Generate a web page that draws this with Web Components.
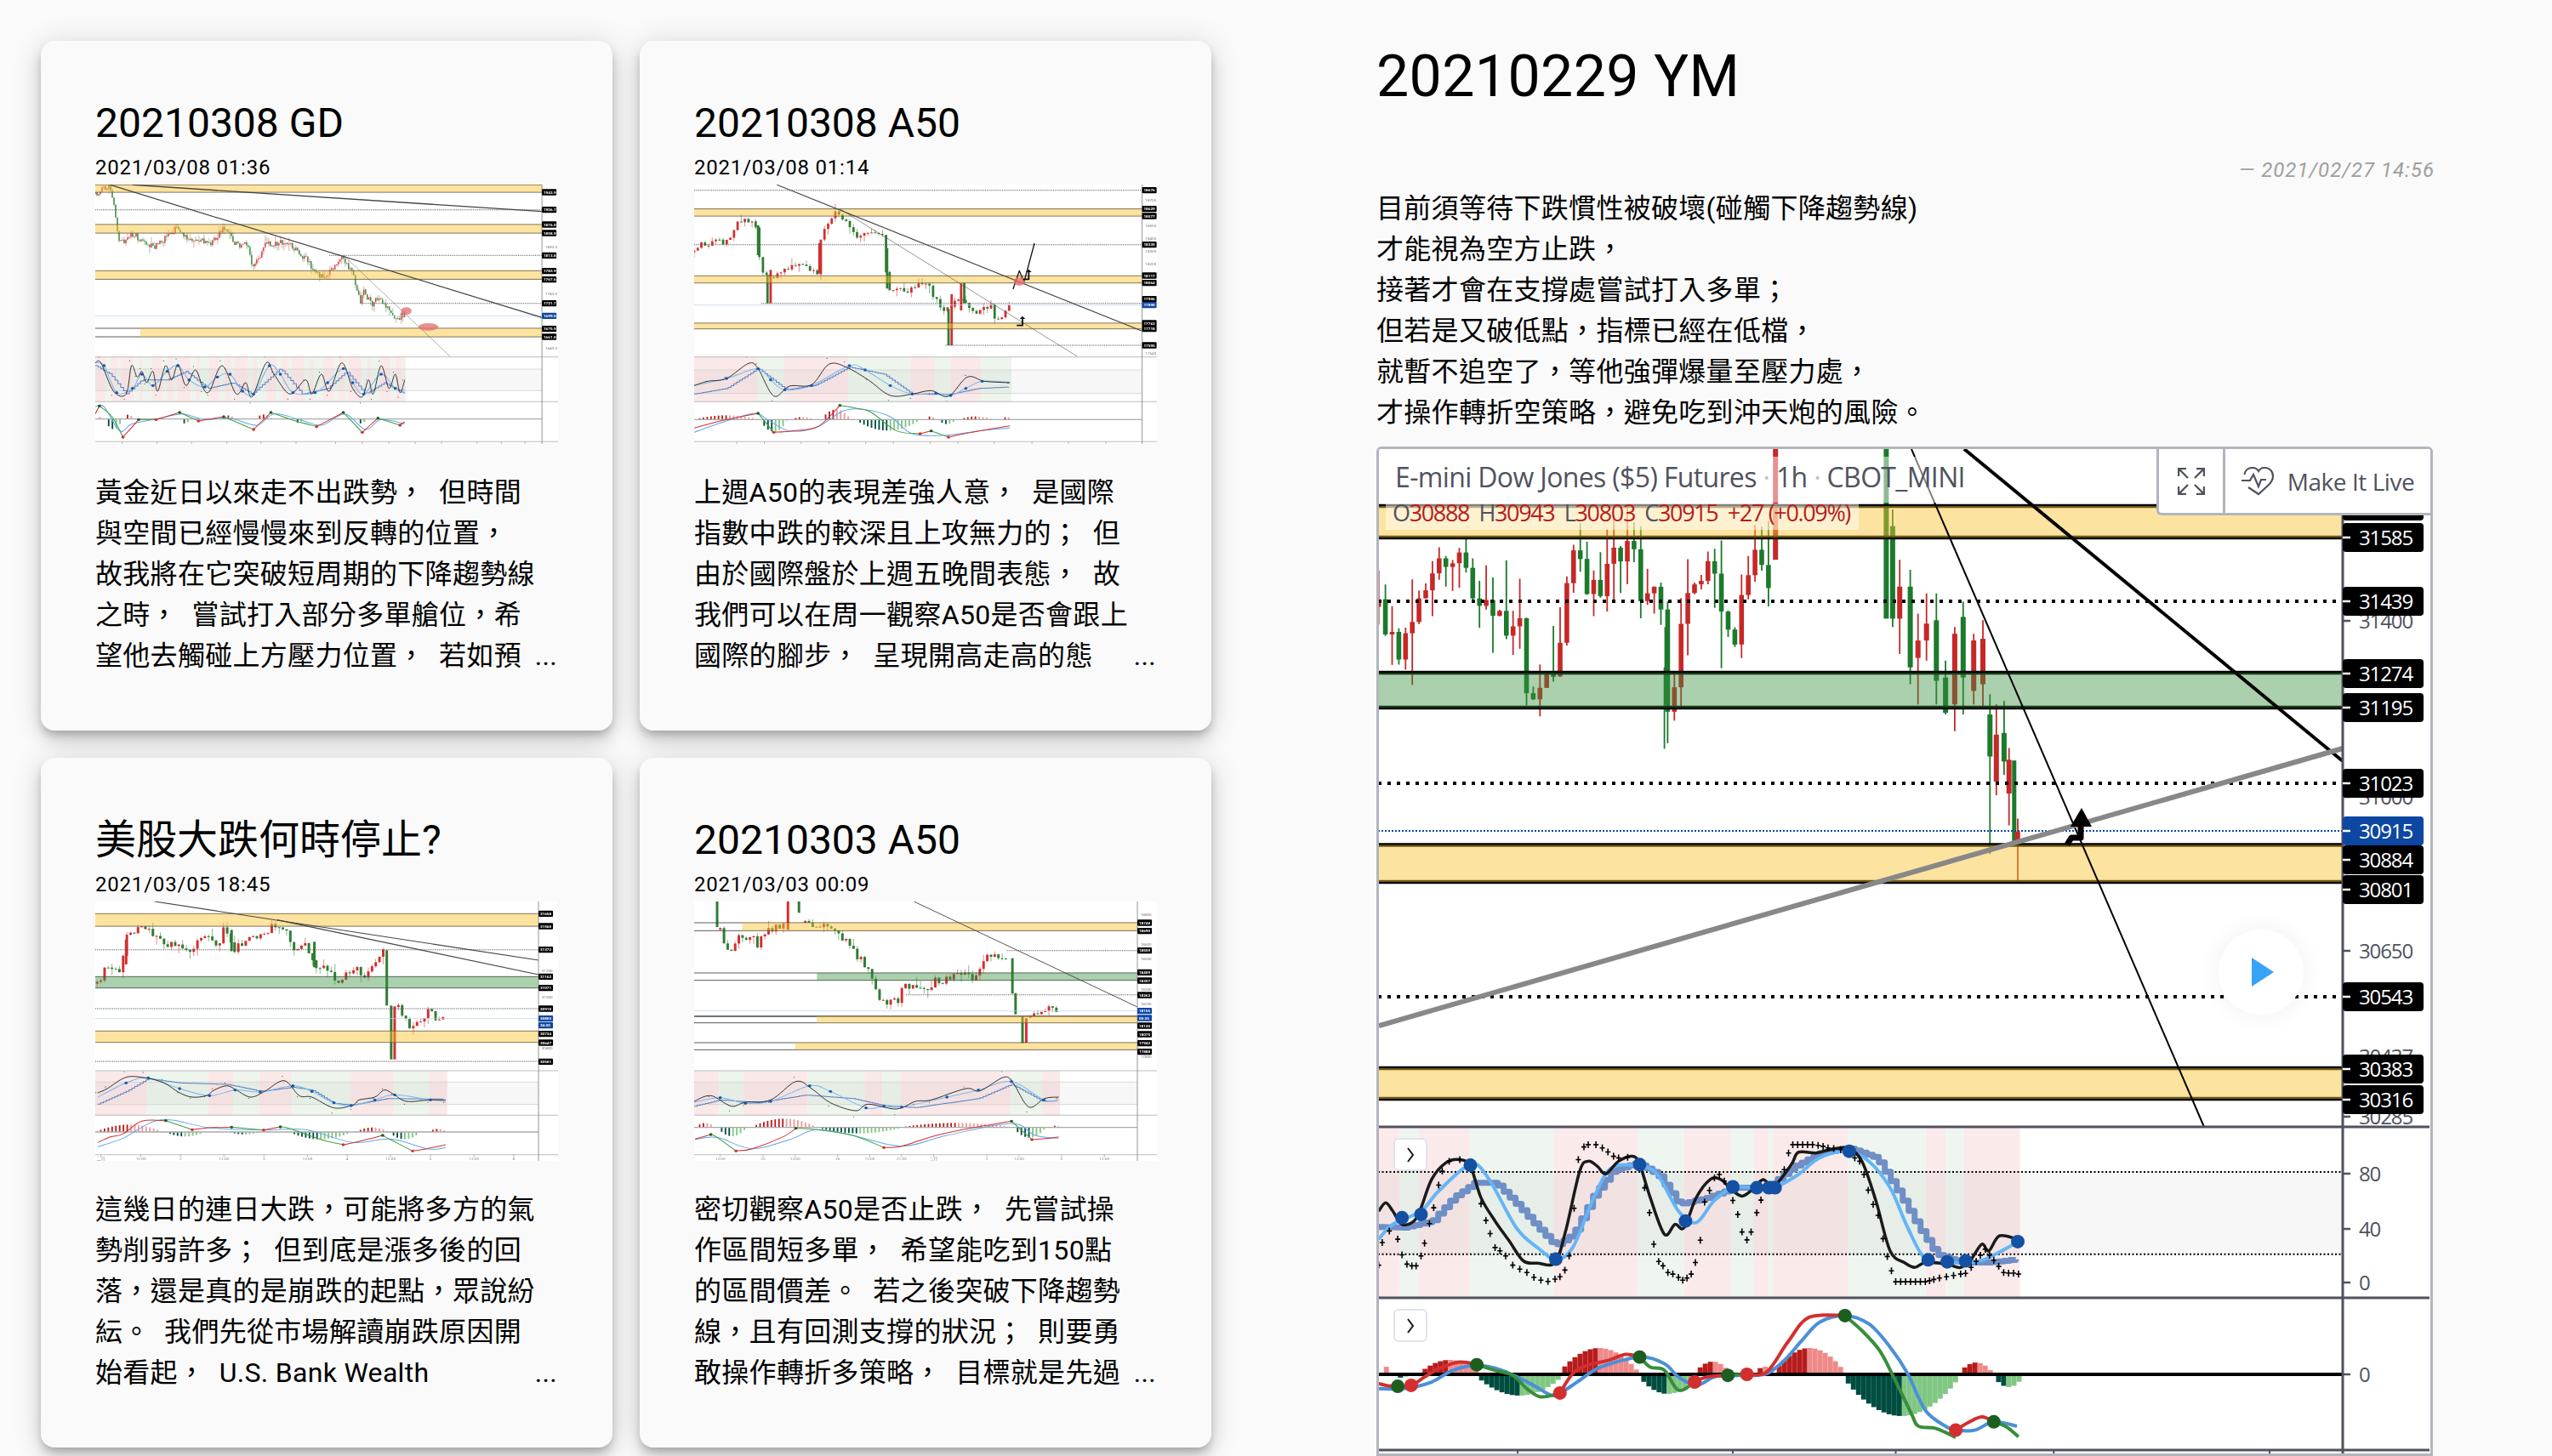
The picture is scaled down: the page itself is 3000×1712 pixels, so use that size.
<!DOCTYPE html>
<html lang="zh-Hant">
<head>
<meta charset="utf-8">
<title>Posts</title>
<style>
  html, body { margin: 0; background: #fafafa; overflow: hidden; }
  body { font-family: Roboto, "Noto Sans CJK TC", sans-serif; color: #000; }
</style>
</head>
<body>
<page-layout>
  <post-card slot="list" heading="20210308 GD" stamp="2021/03/08 01:36"><thumb-chart slot="chart" name="gd"></thumb-chart>黃金近日以來走不出跌勢，  但時間
與空間已經慢慢來到反轉的位置，
故我將在它突破短周期的下降趨勢線
之時，  嘗試打入部分多單艙位，希
望他去觸碰上方壓力位置，  若如預</post-card>
  <post-card slot="list" heading="20210308 A50" stamp="2021/03/08 01:14"><thumb-chart slot="chart" name="a50a"></thumb-chart>上週A50的表現差強人意，  是國際
指數中跌的較深且上攻無力的；  但
由於國際盤於上週五晚間表態，  故
我們可以在周一觀察A50是否會跟上
國際的腳步，  呈現開高走高的態</post-card>
  <post-card slot="list" heading="美股大跌何時停止?" stamp="2021/03/05 18:45"><thumb-chart slot="chart" name="us"></thumb-chart>這幾日的連日大跌，可能將多方的氣
勢削弱許多；  但到底是漲多後的回
落，還是真的是崩跌的起點，眾說紛
紜。  我們先從市場解讀崩跌原因開
始看起，  U.S. Bank Wealth</post-card>
  <post-card slot="list" heading="20210303 A50" stamp="2021/03/03 00:09"><thumb-chart slot="chart" name="a50b"></thumb-chart>密切觀察A50是否止跌，  先嘗試操
作區間短多單，  希望能吃到150點
的區間價差。  若之後突破下降趨勢
線，且有回測支撐的狀況；  則要勇
敢操作轉折多策略，  目標就是先過</post-card>
  <post-view slot="main" heading="20210229 YM" stamp="— 2021/02/27 14:56"><tv-widget slot="chart"></tv-widget>目前須等待下跌慣性被破壞(碰觸下降趨勢線)
才能視為空方止跌，
接著才會在支撐處嘗試打入多單；
但若是又破低點，指標已經在低檔，
就暫不追空了，等他強彈爆量至壓力處，
才操作轉折空策略，避免吃到沖天炮的風險。</post-view>
</page-layout>

<script>
// chart helpers, all coordinates are svg user units
const RED = '#d32f2f', GREEN = '#2e7d32';
const YELLOW = 'rgba(251,192,45,.45)', LEAF = 'rgba(56,142,60,.42)';

function rng(seed) {
  let s = seed;
  return () => { s = (s * 1664525 + 1013904223) % 4294967296; return s / 4294967296; };
}

function interp(pts, x) {
  if (x <= pts[0][0]) return pts[0][1];
  for (let i = 1; i < pts.length; i++) {
    if (x <= pts[i][0]) {
      const t = (x - pts[i - 1][0]) / ((pts[i][0] - pts[i - 1][0]) || 1);
      return pts[i - 1][1] + (pts[i][1] - pts[i - 1][1]) * t;
    }
  }
  return pts[pts.length - 1][1];
}

function smooth(pts) {
  let d = `M${pts[0][0]} ${pts[0][1]}`;
  for (let i = 0; i < pts.length - 1; i++) {
    const p0 = pts[i - 1] || pts[i], p1 = pts[i], p2 = pts[i + 1], p3 = pts[i + 2] || p2;
    const c1 = [p1[0] + (p2[0] - p0[0]) / 6, p1[1] + (p2[1] - p0[1]) / 6];
    const c2 = [p2[0] - (p3[0] - p1[0]) / 6, p2[1] - (p3[1] - p1[1]) / 6];
    d += `C${c1[0].toFixed(1)} ${c1[1].toFixed(1)} ${c2[0].toFixed(1)} ${c2[1].toFixed(1)} ${p2[0]} ${p2[1]}`;
  }
  return d;
}

function stairs(pts, step) {
  const end = pts[pts.length - 1][0];
  let d = `M${pts[0][0]} ${pts[0][1]}`;
  for (let x = pts[0][0] + step; x < end; x += step) {
    d += `H${x.toFixed(1)}V${interp(pts, x).toFixed(1)}`;
  }
  return d;
}

function curve(d, color, w, extra = '') {
  return `<path d="${d}" fill="none" stroke="${color}" stroke-width="${w}" stroke-linejoin="round" ${extra}/>`;
}

function line(x1, y1, x2, y2, color, w, extra = '') {
  return `<line x1="${x1}" y1="${y1}" x2="${x2}" y2="${y2}" stroke="${color}" stroke-width="${w}" ${extra}/>`;
}

function box(x, y, w, h, fill) {
  return `<rect x="${x.toFixed(1)}" y="${y.toFixed(1)}" width="${w.toFixed(1)}" height="${h.toFixed(1)}" fill="${fill}"/>`;
}

function candles(pts, o) {
  const rand = rng(o.seed);
  const end = pts[pts.length - 1][0];
  let out = '';
  let open = pts[0][1];
  for (let x = pts[0][0]; x <= end; x += o.step) {
    const close = interp(pts, x) + (rand() - 0.5) * o.noise;
    const top = Math.min(open, close), bottom = Math.max(open, close);
    const color = close < open ? o.up : o.down;
    const hi = top - rand() * rand() * o.wick, lo = bottom + rand() * rand() * o.wick;
    out += line(x, hi.toFixed(1), x, lo.toFixed(1), color, o.wickW);
    out += box(x - o.w / 2, top, o.w, Math.max(bottom - top, 3), color);
    open = close;
  }
  return out;
}

function histogram(list, zero, step, w, pos, posLight, neg, negLight) {
  let out = '';
  list.forEach(([a, b, h]) => {
    for (let x = a; x < b; x += step) {
      const t = (x - a) / (b - a);
      const v = Math.pow(Math.sin(Math.PI * t), 0.8) * Math.abs(h) + 1;
      const rising = t < 0.5;
      if (h > 0) out += box(x, zero - v, w, v, rising ? pos : posLight);
      else out += box(x, zero, w, v, rising ? neg : negLight);
    }
  });
  return out;
}

// slices a line into rising and falling runs, with a marker on each turn
function turning(pts, w, r, rx) {
  let out = '', marks = '', run = [pts[0]], dir = pts[1][1] < pts[0][1];
  const flush = () => {
    out += curve(smooth(run), dir ? '#d32f2f' : '#43a047', w);
    const last = run[run.length - 1];
    marks += `<ellipse cx="${last[0]}" cy="${last[1]}" rx="${rx}" ry="${r}" fill="${dir ? '#1b5e20' : '#d32f2f'}"/>`;
  };
  for (let i = 1; i < pts.length; i++) {
    const up = pts[i][1] < pts[i - 1][1];
    if (up !== dir) {
      flush();
      run = [pts[i - 1]];
      dir = up;
    }
    run.push(pts[i]);
  }
  out += curve(smooth(run), dir ? '#d32f2f' : '#43a047', w);
  return out + marks;
}

const THIN = [];
for (let x = 32, i = 0; x < 1018; i++) {
  const w = [34, 14, 22, 9, 44, 17, 11, 30][i % 8];
  THIN.push([x, Math.min(x + w, 1018), i % 2 ? 'g' : 'p']);
  x += w;
}

const THUMBS = {
  gd: {
    vb: [32, 51, 1470, 915], axis: 1451, seed: 11, step: 5.4, w: 3.4, noise: 24, wick: 26, wickW: 1.2,
    runs: [[[32, 85], [75, 55], [90, 120], [108, 260], [150, 225], [220, 275], [290, 200], [330, 240], [400, 260], [440, 200], [480, 260], [520, 265], [530, 350], [575, 260], [640, 250], [700, 310], [740, 370], [770, 375], [810, 305], [850, 360], [875, 470], [885, 420], [910, 480], [930, 445], [985, 530], [1015, 505]]],
    bands: [[52, 78, 32], [192, 222, 32], [355, 385, 32], [558, 588, 175]],
    dots: [[140, 32], [301, 775], [470, 875]], cur: 514,
    lines: [[80, 52, 1451, 520, 3.5], [150, 52, 1451, 146, 4], [820, 300, 1160, 658, 1.2]],
    blobs: [[1020, 497, 17, 13], [1090, 553, 32, 13]],
    labels: [[78, '1942.9'], [140, '1906.7'], [192, '1876.0'], [222, '1858.9'], [301, '1813.8'], [356, '1783.9'], [386, '1767.6'], [470, '1721.7'], [514, '1699.0', 1], [560, '1675.9'], [588, '1661.0']],
    grey: [[273, '1830.0'], [437, '1740.0'], [629, '1640.0']],
    p1: 659, p2: 817, p3: 958,
    stripes: THIN, o80: 702, o20: 778,
    k: [[32, 680], [50, 680], [90, 780], [130, 790], [147, 690], [165, 730], [180, 710], [195, 750], [215, 710], [230, 780], [255, 690], [275, 740], [295, 685], [320, 760], [350, 705], [375, 770], [395, 780], [435, 690], [480, 790], [510, 750], [530, 800], [575, 680], [600, 720], [650, 790], [700, 740], [720, 790], [750, 720], [775, 780], [815, 680], [850, 770], [880, 800], [900, 740], [915, 790], [940, 690], [965, 770], [985, 720], [1000, 785], [1015, 740]],
    d: [[32, 680], [60, 690], [100, 785], [150, 770], [180, 720], [215, 760], [260, 710], [295, 690], [330, 740], [380, 765], [420, 730], [460, 720], [500, 780], [535, 790], [585, 690], [620, 720], [660, 785], [730, 785], [770, 750], [820, 700], [850, 750], [885, 790], [940, 720], [985, 770], [1015, 775]],
    sd: [[32, 690], [80, 720], [130, 790], [180, 740], [260, 740], [320, 710], [390, 770], [470, 750], [530, 790], [620, 700], [690, 790], [770, 770], [830, 710], [890, 790], [950, 750], [1015, 790]],
    zero: 878, hist: [[32, 45, 20], [60, 115, -35], [120, 150, 15], [300, 330, -15], [440, 470, 12], [540, 590, 15], [660, 690, -12], [860, 890, -15]],
    macd: [[32, 860], [45, 832], [85, 870], [120, 942], [170, 880], [225, 880], [300, 855], [360, 885], [440, 870], [535, 915], [590, 855], [660, 882], [735, 905], [820, 855], [880, 925], [930, 875], [1000, 900], [1015, 888]],
    sig: [[32, 835], [60, 835], [110, 920], [150, 895], [240, 875], [310, 860], [380, 880], [460, 875], [545, 900], [600, 860], [680, 880], [750, 900], [825, 860], [890, 915], [940, 880], [1015, 895]],
    ticks: [[117, ''], [228, ''], [338, ''], [450, ''], [558, ''], [670, ''], [795, ''], [880, ''], [965, ''], [1048, ''], [1132, ''], [1245, ''], [1322, ''], [1397, '']]
  },
  a50a: {
    vb: [97, 51, 1470, 915], axis: 1520, seed: 5, step: 11.5, w: 7.5, noise: 24, wick: 30, wickW: 1.6,
    runs: [[[97, 290], [125, 260], [160, 250], [210, 255], [230, 185], [290, 175], [300, 300], [320, 370], [345, 380], [370, 365], [420, 340], [470, 345], [490, 360], [500, 240], [545, 155], [570, 170], [610, 240], [650, 215], [700, 240], [710, 410], [750, 420], [790, 425], [840, 385], [860, 450], [880, 490], [900, 490], [925, 470], [945, 440], [960, 480], [995, 505], [1040, 475], [1055, 540], [1100, 480]]],
    bars: [[330, 370, 470, GREEN], [340, 352, 470, RED], [905, 490, 618, GREEN], [915, 438, 618, RED], [945, 400, 495, RED], [955, 398, 470, GREEN], [710, 275, 418, GREEN], [495, 258, 365, RED], [300, 195, 300, GREEN]],
    bands: [[137, 162, 97], [373, 398, 97], [540, 560, 97]],
    dots: [[71, 97], [263, 97], [470, 310], [618, 895]], cur: 476,
    lines: [[360, 52, 1520, 568, 3.5], [560, 137, 1315, 658, 1.6]],
    blobs: [[1130, 393, 18, 15]],
    poly: [[[1110, 420], [1130, 355], [1145, 395], [1178, 258]]],
    arrows: [[1160, 350, 385], [1140, 515, 548]],
    labels: [[71, '18676'], [137, '18629'], [162, '18577'], [263, '18335'], [372, '18117'], [398, '18064'], [455, '17906'], [476, '17890', 1], [540, '17762'], [560, '17718'], [618, '17595']],
    grey: [[106, '18700'], [197, '18500'], [242, '18400'], [288, '18300'], [333, '18200'], [646, '17540']],
    p1: 659, p2: 817, p3: 958,
    stripes: [[97, 297, 'p'], [297, 383, 'g'], [383, 588, 'p'], [588, 785, 'g'], [785, 862, 'p'], [862, 912, 'g'], [912, 1008, 'p'], [1008, 1105, 'g']],
    o80: 705, o20: 788,
    k: [[97, 760], [140, 745], [200, 735], [270, 682], [300, 700], [350, 797], [400, 762], [470, 757], [525, 685], [580, 695], [650, 740], [720, 795], [790, 790], [850, 778], [905, 798], [965, 730], [1020, 745], [1100, 750]],
    d: [[97, 760], [200, 735], [300, 700], [340, 740], [385, 775], [470, 760], [590, 690], [640, 705], [720, 760], [790, 790], [865, 787], [912, 795], [960, 770], [1012, 745], [1100, 748]],
    sd: [[97, 790], [200, 770], [300, 700], [390, 775], [480, 760], [590, 695], [700, 720], [790, 790], [905, 792], [1000, 770], [1100, 765]],
    zero: 880, hist: [[100, 295, 14], [305, 390, -42], [405, 470, 8], [500, 590, 35], [610, 810, -38], [830, 860, 10], [870, 925, -15], [940, 1040, 10], [1070, 1105, 8]],
    macd: [[97, 910], [200, 880], [300, 858], [350, 925], [408, 920], [490, 905], [560, 830], [612, 840], [660, 855], [740, 920], [815, 930], [850, 920], [875, 930], [905, 942], [945, 932], [1030, 915], [1100, 902]],
    sig: [[97, 925], [200, 885], [290, 858], [330, 880], [400, 920], [490, 905], [570, 850], [640, 845], [720, 870], [790, 930], [900, 935], [1000, 920], [1100, 910]],
    ticks: [[232, ''], [320, ''], [437, ''], [525, ''], [642, ''], [730, ''], [847, ''], [935, ''], [1050, ''], [1170, ''], [1286, ''], [1405, '']]
  },
  us: {
    vb: [32, 0, 1470, 915], axis: 1440, seed: 23, step: 11.8, w: 8, noise: 26, wick: 34, wickW: 1.6,
    runs: [[[38, 290], [50, 270], [60, 240], [110, 240], [130, 130], [170, 100], [200, 100], [210, 105], [250, 150], [300, 155], [330, 180], [370, 120], [420, 155], [440, 100], [470, 170], [520, 135], [560, 120], [610, 75], [640, 100], [660, 165], [700, 145], [730, 230], [770, 235], [800, 300], [830, 260], [870, 240], [880, 280], [920, 210], [950, 175]], [[995, 372], [1015, 410], [1030, 455], [1060, 420], [1095, 385], [1120, 430], [1145, 415]]],
    bars: [[130, 135, 222, RED], [958, 172, 367, GREEN], [972, 367, 557, GREEN], [983, 370, 557, RED], [728, 142, 232, GREEN], [465, 100, 175, GREEN]],
    bands: [[43, 87, 32], [457, 497, 32]], leaf: [[265, 305, 32]],
    dots: [[170, 32], [378, 32], [564, 32]], cur: 413,
    lines: [[220, 0, 1440, 207, 3.5], [610, 65, 1440, 258, 3.5]],
    labels: [[43, '31658'], [87, '31560'], [170, '31372'], [265, '31162'], [305, '31071'], [378, '30910'], [413, '30803', 1], [437, '24:20', 1], [467, '30734'], [498, '30647'], [565, '30501']],
    grey: [[246, '31200'], [338, '31000'], [518, '30800']],
    p1: 597, p2: 754, p3: 893,
    stripes: [[32, 196, 'p'], [196, 390, 'g'], [390, 470, 'p'], [470, 552, 'g'], [552, 657, 'p'], [657, 843, 'g'], [843, 980, 'p'], [980, 1092, 'g'], [1092, 1150, 'p']],
    o80: 637, o20: 716,
    k: [[40, 675], [70, 660], [130, 620], [190, 622], [250, 640], [300, 675], [340, 690], [385, 685], [410, 665], [450, 650], [480, 665], [525, 690], [570, 670], [632, 632], [680, 685], [720, 690], [790, 728], [850, 718], [870, 700], [920, 690], [950, 665], [980, 680], [1020, 705], [1095, 700], [1145, 700]],
    d: [[40, 690], [130, 640], [200, 622], [300, 660], [395, 685], [476, 665], [556, 672], [660, 650], [720, 670], [790, 710], [845, 720], [920, 700], [983, 682], [1097, 700], [1145, 705]],
    sd: [[40, 715], [130, 670], [200, 625], [300, 640], [450, 645], [560, 670], [660, 655], [720, 665], [790, 712], [850, 718], [960, 695], [1095, 697], [1145, 697]],
    zero: 813, hist: [[35, 240, 25], [255, 375, -15], [460, 550, -8], [650, 840, -25], [860, 960, 15], [965, 1060, -25], [1090, 1145, 10]],
    macd: [[40, 850], [80, 830], [120, 820], [180, 775], [256, 773], [340, 805], [395, 798], [465, 796], [567, 806], [620, 795], [648, 800], [750, 840], [820, 858], [856, 850], [945, 825], [970, 840], [1040, 880], [1085, 872], [1145, 858]],
    sig: [[40, 865], [120, 835], [240, 770], [395, 798], [565, 806], [700, 805], [850, 850], [970, 838], [1090, 873], [1145, 868]],
    ticks: [[50, '二月'], [177, '12:00'], [303, '2'], [441, '12:00'], [568, '3'], [706, '12:00'], [832, '4'], [970, '12:00'], [1097, '5'], [1235, '12:00'], [1361, '8']]
  },
  a50b: {
    vb: [97, 0, 1470, 915], axis: 1505, seed: 9, step: 11.8, w: 8, noise: 24, wick: 34, wickW: 1.6,
    runs: [[[180, 100], [190, 150], [215, 170], [235, 125], [270, 125], [280, 110], [295, 160], [320, 105], [385, 85]], [[450, 75], [490, 85], [540, 85], [555, 120], [600, 150], [605, 185], [630, 210], [660, 265], [680, 325], [695, 360], [750, 345], [760, 290], [800, 310], [850, 320], [860, 250], [870, 305], [900, 270], [950, 260], [990, 275], [1005, 240], [1030, 190], [1095, 200]], [[1165, 410], [1185, 390], [1240, 370], [1255, 388]]],
    bars: [[170, 0, 90, GREEN], [395, 0, 100, RED], [430, 0, 40, GREEN], [1108, 200, 325, GREEN], [1118, 323, 398, GREEN], [1140, 405, 500, GREEN], [1152, 412, 498, RED]],
    bands: [[75, 103, 250], [405, 428, 487], [498, 523, 418]], leaf: [[252, 278, 487]],
    rules: [[75, 97], [103, 97], [252, 97], [278, 97], [405, 97, 4], [428, 97], [498, 97], [523, 97]],
    dots: [[173, 1090], [329, 770]], cur: 386,
    lines: [[795, 0, 1505, 372, 2.6]],
    labels: [[75, '18748'], [104, '18690'], [173, '18559'], [250, '18409'], [279, '18357'], [330, '18262'], [386, '18155', 1], [411, '00:35', 1], [438, '18120'], [468, '18075'], [500, '17942'], [530, '17888']],
    grey: [[48, '18800'], [152, '18600'], [203, '18500'], [310, '18300'], [362, '18200'], [548, '17800']],
    p1: 597, p2: 754, p3: 893,
    stripes: [[97, 176, 'p'], [176, 253, 'g'], [253, 458, 'p'], [458, 638, 'g'], [638, 695, 'p'], [695, 752, 'g'], [752, 1103, 'p'], [1103, 1205, 'g'], [1205, 1259, 'p']],
    o80: 637, o20: 716,
    k: [[97, 705], [150, 685], [215, 722], [260, 708], [340, 700], [420, 635], [470, 660], [530, 710], [610, 738], [650, 715], [740, 732], [800, 705], [850, 700], [960, 660], [1005, 668], [1080, 620], [1110, 640], [1160, 725], [1210, 695], [1255, 690]],
    d: [[97, 708], [180, 692], [260, 712], [340, 705], [464, 650], [530, 670], [643, 728], [700, 722], [756, 725], [900, 690], [1000, 665], [1105, 635], [1208, 700], [1255, 700]],
    sd: [[97, 722], [180, 700], [300, 710], [450, 683], [600, 695], [700, 720], [800, 727], [1000, 695], [1105, 645], [1205, 705], [1255, 703]],
    zero: 797, hist: [[100, 160, 15], [170, 260, -30], [280, 480, 30], [490, 750, -20], [755, 1100, 15], [1110, 1210, -35], [1228, 1258, 5]],
    macd: [[100, 838], [150, 822], [170, 832], [230, 880], [282, 872], [380, 830], [420, 800], [485, 805], [600, 825], [700, 868], [757, 863], [850, 830], [950, 805], [1105, 775], [1170, 840], [1230, 835], [1255, 830]],
    sig: [[100, 840], [170, 832], [280, 872], [400, 840], [485, 805], [600, 825], [757, 863], [900, 825], [1105, 783], [1180, 825], [1255, 835]],
    ticks: [[180, '12:00'], [316, '25'], [418, '12:00'], [553, '26'], [655, '12:00'], [756, '21:00'], [858, '三月'], [1027, '2'], [1129, '12:00'], [1264, '3'], [1400, '12:00']]
  }
};

class PageLayout extends HTMLElement {
  constructor() {
    super();
    this.attachShadow({ mode: 'open' });
    this.shadowRoot.innerHTML = `
      <style>
        :host { display: flex; gap: 194px; padding: 48px 0 0 48px; height: 1664px; overflow: hidden; }
        .list { display: grid; grid-template-columns: 672px 672px; grid-auto-rows: 811px; gap: 32px; flex: none; align-content: start; }
        .main { width: 1242px; flex: none; }
      </style>
      <div class="list"><slot name="list"></slot></div>
      <div class="main"><slot name="main"></slot></div>
    `;
  }
}

class PostCard extends HTMLElement {
  constructor() {
    super();
    this.attachShadow({ mode: 'open' });
    this.shadowRoot.innerHTML = `
      <style>
        :host {
          display: flex;
          flex-direction: column;
          box-sizing: border-box;
          padding: 64px;
          height: 811px;
          background: #fafafa;
          border-radius: 16px;
          box-shadow: 0 6px 10px -2px rgba(0,0,0,.2), 0 12px 20px 0 rgba(0,0,0,.14), 0 2px 36px 0 rgba(0,0,0,.12);
        }
        h2 { margin: 0; height: 64px; font: 400 48px/65px Roboto, "Noto Sans CJK TC", sans-serif; }
        .stamp { font: 400 24px/43px Roboto, sans-serif; letter-spacing: .8px; height: 41px; }
        .text {
          position: relative;
          margin-top: 33px;
          height: 240px;
          font: 400 32px/48px Roboto, "Noto Sans CJK TC", sans-serif;
          letter-spacing: .3px;
          white-space: pre;
          overflow: hidden;
        }
        .more { position: absolute; right: 1px; bottom: 0; }
      </style>
      <h2></h2>
      <div class="stamp"></div>
      <slot name="chart"></slot>
      <div class="text"><slot></slot><span class="more">...</span></div>
    `;
    this.shadowRoot.querySelector('h2').textContent = this.getAttribute('heading');
    this.shadowRoot.querySelector('.stamp').textContent = this.getAttribute('stamp');
  }
}

class ThumbChart extends HTMLElement {
  constructor() {
    super();
    this.attachShadow({ mode: 'open' });
  }

  connectedCallback() {
    const c = THUMBS[this.getAttribute('name')];
    const [vx, vy, vw, vh] = c.vb;
    const right = vx + vw;
    let s = '';
    s += box(vx, vy, vw, vh, '#fff');
    c.runs.forEach((run) => {
      s += candles(run, { seed: c.seed, step: c.step, w: c.w, noise: c.noise, wick: c.wick, wickW: c.wickW, up: RED, down: GREEN });
    });
    (c.bars || []).forEach(([x, a, b, color]) => { s += box(x - c.w / 2, a, c.w, b - a, color); });
    (c.rules || c.bands.concat(c.leaf || []).flatMap((b) => [[b[0], vx], [b[1], vx]])).forEach(([y, x0, w]) => {
      s += line(x0, y, c.axis, y, '#444', w || 2.5);
    });
    c.bands.forEach(([a, b, x0]) => { s += box(x0, a, c.axis - x0, b - a, YELLOW); });
    (c.leaf || []).forEach(([a, b, x0]) => { s += box(x0, a, c.axis - x0, b - a, LEAF); });
    c.dots.forEach(([y, x0]) => { s += line(x0, y, c.axis, y, '#555', 3, 'stroke-dasharray="3 3"'); });
    s += line(vx, c.cur, c.axis, c.cur, '#bcd3ea', 2);
    c.lines.forEach(([a, b, d, e, w]) => { s += line(a, b, d, e, '#444', w); });
    (c.poly || []).forEach((p) => { s += curve('M' + p.map((q) => q.join(' ')).join('L'), '#111', 3.5); });
    (c.blobs || []).forEach(([x, y, rx, ry]) => { s += `<ellipse cx="${x}" cy="${y}" rx="${rx}" ry="${ry}" fill="#e57373" opacity=".8"/>`; });
    (c.arrows || []).forEach(([x, a, b]) => {
      s += curve(`M${x - 18} ${b}H${x}V${a + 6}`, '#111', 5);
      s += `<polygon points="${x - 9},${a + 10} ${x},${a} ${x + 9},${a + 10}" fill="#111"/>`;
    });
    // oscillator pane
    c.stripes.forEach(([a, b, t]) => { s += box(a, c.p1, b - a, c.p2 - c.p1, t === 'p' ? '#fbe9e9' : '#edf5ed'); });
    s += box(vx, c.o80, c.axis - vx, c.o20 - c.o80, 'rgba(0,0,0,.03)');
    s += line(vx, c.o80, c.axis, c.o80, '#ccc', 2);
    s += line(vx, c.o20, c.axis, c.o20, '#ccc', 2);
    s += curve(stairs(c.sd, 9), '#5b84c4', 3);
    s += curve(smooth(c.d), '#7ab8ee', 3);
    s += curve(smooth(c.k), '#222', 2.6);
    c.k.forEach(([x, y]) => {
      const dy = (y - (c.o80 + c.o20) / 2) * 1.35 + (c.o80 + c.o20) / 2;
      s += `<circle cx="${x - 6}" cy="${dy.toFixed(1)}" r="1.6" fill="#333"/>`;
    });
    c.d.slice(1, -1).forEach(([x, y]) => { s += `<ellipse cx="${x}" cy="${y}" rx="5" ry="5" fill="#1757a8"/>`; });
    // macd pane
    s += histogram(c.hist, c.zero, 12, 5, '#b71c1c', '#ef9a9a', '#004d40', '#81c784');
    s += line(vx, c.zero, c.axis, c.zero, '#aaa', 4);
    s += curve(smooth(c.sig), '#64a8e8', 3);
    s += turning(c.macd, 3, 5, 5);
    // panes and price scale
    [c.p1, c.p2, c.p3].forEach((y) => { s += line(vx, y, right, y, '#bbb', 3); });
    s += line(c.axis, vy, c.axis, vy + vh, '#888', 2.5);
    c.grey.forEach(([y, t]) => { s += `<text class="g" x="${c.axis + 10}" y="${y + 4}">${t}</text>`; });
    c.labels.forEach(([y, t, blue]) => {
      s += `<rect x="${c.axis}" y="${y - 11}" width="46" height="22" rx="3" fill="${blue ? '#0d47a1' : '#000'}"/>`;
      s += `<text class="l" x="${c.axis + 5}" y="${y + 5}">${t}</text>`;
    });
    c.ticks.forEach(([x, t]) => {
      s += line(x, c.p3, x, c.p3 + 8, '#999', 2);
      if (t) s += `<text class="t" x="${x}" y="${c.p3 + 19}" text-anchor="middle">${t}</text>`;
    });
    this.shadowRoot.innerHTML = `
      <style>
        :host { display: block; width: 544px; height: 305px; flex: none; }
        svg { display: block; width: 544px; height: 305px; filter: blur(.45px); }
        text { font-family: Roboto, "Noto Sans CJK TC", sans-serif; }
        .l { font-size: 12.500px; font-weight: 700; fill: #fff; }
        .g { font-size: 12.500px; fill: #777; }
        .t { font-size: 13px; fill: #888; }
      </style>
      <svg viewBox="${vx} ${vy} ${vw} ${vh}" preserveAspectRatio="none">${s}</svg>
    `;
  }
}

class PostView extends HTMLElement {
  constructor() {
    super();
    this.attachShadow({ mode: 'open' });
    this.shadowRoot.innerHTML = `
      <style>
        :host { display: block; }
        h1 { margin: 0 0 52px; height: 80px; font: 400 68px/84px Roboto, sans-serif; letter-spacing: .4px; }
        .stamp { text-align: right; margin-right: -2px; font: italic 400 24px/40px Roboto, sans-serif; letter-spacing: 1px; color: #9e9e9e; }
        .text { margin: 1px 0 16px; font: 400 32px/48px Roboto, "Noto Sans CJK TC", sans-serif; letter-spacing: .3px; white-space: pre; }
      </style>
      <h1></h1>
      <div class="stamp"></div>
      <div class="text"><slot></slot></div>
      <slot name="chart"></slot>
    `;
    this.shadowRoot.querySelector('h1').textContent = this.getAttribute('heading');
    this.shadowRoot.querySelector('.stamp').textContent = this.getAttribute('stamp');
  }
}

// readings of the large chart, taken from two crops with different scales
const zx = (v) => +(1600 + v / 1.206).toFixed(1);
const y3 = (v) => +(500 + v / 2.529).toFixed(1);
const y4 = (v) => +(1100 + v / 2.562).toFixed(1);
const top3 = (pts) => pts.map(([a, b]) => [zx(a), y3(b)]);
const low4 = (pts) => pts.map(([a, b]) => [zx(a), y4(b)]);

function bigChart() {
  const AX = 2754, L = 1620;
  const opt = { step: 7.9, w: 5.6, noise: 34, wick: 70, wickW: 1.8, up: '#c62828', down: '#1b7a2b' };
  let s = box(1618, 525, 1241, 1187, '#fff');
  s += candles(top3([[25, 540], [40, 620], [50, 680], [65, 600], [85, 540], [100, 450], [130, 380], [150, 450], [165, 520], [195, 590], [225, 590], [235, 800], [265, 770], [280, 650], [295, 400], [305, 340], [320, 470], [340, 480], [350, 380], [385, 345], [395, 550], [420, 460], [435, 830], [445, 760], [460, 480], [480, 470], [495, 430], [515, 560], [530, 610], [545, 420], [565, 385], [580, 540], [587, 400]]), { ...opt, seed: 3 });
  // candles that run off the top, and the steep leg by hand
  s += box(zx(584), 528, 6, y3(400) - 528, '#c62828');
  s += box(zx(741), 528, 6, y3(575) - 528, '#1b7a2b');
  s += line(zx(430), y3(720), zx(430), y3(962), '#1b7a2b', 1.8);
  s += box(zx(430), y3(600), 6, y3(830) - y3(600), '#1b7a2b');
  [[750, 300, 575, 0, 250, 600], [760, 480, 575, 1, 400, 680], [775, 480, 720, 0, 430, 770], [786, 640, 692, 1, 560, 830], [798, 590, 640, 1, 500, 700], [812, 580, 760, 0, 500, 830], [825, 750, 855, 0, 700, 860], [838, 620, 830, 1, 600, 910], [850, 570, 750, 0, 525, 860], [865, 640, 790, 1, 620, 830], [878, 635, 770, 1, 580, 840], [888, 860, 985, 0, 800, 1275], [897, 920, 1060, 1, 830, 1100], [908, 915, 1000, 0, 820, 1040], [915, 995, 1095, 1, 960, 1190]].forEach(([a, t, b, up, h, l]) => {
    const color = up ? '#c62828' : '#1b7a2b';
    s += line(zx(a) + 3, y3(h), zx(a) + 3, y3(l), color, 1.8);
    s += box(zx(a), y3(t), 6, y3(b) - y3(t), color);
  });
  s += box(zx(923), y3(997), 5, y3(1245) - y3(997), '#1b7a2b');
  s += box(zx(927), y3(1208), 6, y3(1245) - y3(1208), '#c62828');
  s += line(zx(931), y3(1170), zx(931), y3(1355), '#c62828', 1.8);
  // levels
  const bar = (y, color, w = 4.5) => line(L, y, AX, y, color, w);
  s += bar(595, '#000') + bar(632, '#000');
  s += bar(791, '#000') + bar(832, '#000');
  s += bar(993.5, '#000') + bar(1037, '#000');
  s += bar(1256, '#000') + bar(1292, '#000');
  s += box(L, 595, AX - L, 37, YELLOW);
  s += box(L, 791, AX - L, 41, LEAF);
  s += box(L, 993.5, AX - L, 43.5, YELLOW);
  s += box(L, 1256, AX - L, 36, YELLOW);
  [707, 921, 1172].forEach((y) => { s += line(L, y, AX, y, '#000', 4, 'stroke-dasharray="4 7"'); });
  s += line(L, 977, AX, 977, '#0d47a1', 2, 'stroke-dasharray="2 2"');
  // drawn lines
  s += line(2309, 528, 2754, 895, '#000', 4);
  s += line(2247, 528, 2591, 1325, '#000', 2);
  s += line(2754, 880, 1621, 1206, '#888', 6);
  s += curve('M2430 993l5-8h11V968', '#000', 7);
  s += '<polygon points="2434,972 2447,950 2459,972" fill="#000"/>';

  // stochastic pane
  const P1 = 1325, P2 = 1526, P3 = 1705;
  [[25, 55, 'p'], [55, 82, 'g'], [82, 154, 'p'], [154, 273, 'g'], [273, 392, 'p'], [392, 458, 'g'], [458, 525, 'p'], [525, 557, 'g'], [557, 578, 'p'], [578, 584, 'g'], [584, 690, 'p'], [690, 801, 'g'], [801, 829, 'p'], [829, 855, 'g'], [855, 934, 'p']].forEach(([a, b, t]) => {
    s += box(zx(a), P1, zx(b) - zx(a), P2 - P1, t === 'p' ? '#fbeaea' : '#eef6ef');
  });
  s += box(L, y4(712), AX - L, y4(960) - y4(712), 'rgba(0,0,0,.03)');
  [712, 960].forEach((v) => { s += line(L, y4(v), AX, y4(v), '#000', 2, 'stroke-dasharray="2 2.5"'); });
  s += curve(stairs(low4([[25, 878], [60, 880], [100, 860], [130, 790], [160, 745], [190, 745], [220, 810], [250, 880], [275, 935], [300, 900], [330, 780], [355, 710], [390, 685], [420, 720], [450, 810], [490, 790], [530, 760], [575, 760], [610, 700], [650, 655], [690, 640], [730, 670], [760, 770], [790, 880], [815, 960], [850, 985], [890, 985], [930, 975]]), 7), '#6f8fc6', 7);
  s += curve(smooth(low4([[25, 915], [45, 870], [85, 830], [110, 770], [155, 690], [180, 730], [220, 880], [250, 940], [276, 975], [300, 940], [330, 790], [355, 700], [395, 695], [420, 720], [450, 830], [475, 865], [500, 800], [527, 760], [560, 760], [590, 755], [620, 720], [650, 670], [690, 650], [720, 680], [750, 760], [775, 880], [800, 975], [830, 985], [857, 985], [885, 975], [930, 925]])), '#64b5f6', 4);
  s += curve(smooth(low4([[25, 830], [35, 805], [45, 830], [58, 870], [75, 860], [85, 820], [100, 735], [120, 685], [140, 675], [155, 695], [170, 790], [190, 860], [210, 920], [230, 980], [250, 987], [275, 985], [290, 890], [310, 710], [322, 680], [335, 695], [347, 718], [365, 680], [385, 665], [395, 690], [410, 790], [430, 900], [445, 870], [458, 880], [475, 790], [495, 735], [510, 735], [525, 765], [540, 785], [555, 765], [570, 735], [585, 755], [610, 690], [620, 653], [645, 655], [665, 645], [690, 640], [710, 680], [730, 800], [750, 950], [770, 985], [785, 1000], [800, 985], [830, 990], [850, 1000], [865, 975], [880, 930], [890, 950], [905, 905], [930, 915]])), '#1a1a1a', 3.5);
  let plus = '';
  const crosses = [[25, 993], [30, 925], [40, 890], [52, 915], [58, 962], [65, 990], [72, 995], [78, 995], [85, 965], [90, 927], [97, 868], [103, 820], [110, 752], [115, 710], [125, 680], [140, 675], [155, 690], [170, 808], [177, 858], [183, 898], [190, 940], [197, 950], [205, 965], [215, 993], [225, 1005], [235, 1015], [245, 1030], [255, 1038], [265, 1042], [275, 1035], [282, 1028], [289, 1008], [295, 965], [302, 822], [308, 675], [316, 637], [322, 630], [333, 630], [342, 640], [350, 652], [358, 665], [365, 670], [378, 668], [395, 700], [402, 760], [409, 835], [415, 930], [422, 982], [428, 995], [435, 1015], [442, 1020], [450, 1030], [456, 1038], [462, 1032], [468, 1020], [474, 985], [481, 918], [487, 803], [494, 768], [501, 730], [508, 720], [515, 740], [527, 798], [534, 840], [540, 893], [547, 917], [553, 893], [561, 835], [567, 797], [600, 705], [606, 655], [612, 630], [619, 630], [626, 630], [633, 630], [640, 630], [648, 632], [655, 635], [662, 640], [670, 642], [680, 645], [700, 670], [707, 680], [713, 720], [719, 767], [726, 810], [733, 843], [740, 913], [746, 967], [752, 1010], [758, 1043], [765, 1043], [772, 1043], [779, 1043], [786, 1043], [793, 1043], [800, 1043], [806, 1040], [812, 1036], [820, 1032], [830, 1028], [840, 1024], [850, 1020], [857, 1018], [865, 1000], [872, 982], [878, 963], [885, 945], [891, 963], [897, 978], [904, 997], [911, 1015], [918, 1017], [925, 1017], [932, 1020]];
  crosses.forEach(([a, b]) => { plus += `M${zx(a) - 3} ${y4(b)}h6M${zx(a)} ${y4(b) - 4}v8`; });
  s += curve(plus, '#000', 1.6);
  [[58, 850], [85, 840], [155, 692], [276, 975], [395, 690], [460, 860], [527, 757], [561, 760], [578, 760], [587, 760], [692, 650], [804, 977], [831, 983], [857, 980], [931, 922]].forEach(([a, b]) => {
    s += `<circle cx="${zx(a)}" cy="${y4(b)}" r="8" fill="#1450a3"/>`;
  });

  // macd pane
  const Z = y4(1322);
  s += histogram([[25, 38, 8], [80, 165, 16], [278, 390, 30], [470, 520, 14], [555, 582, 8], [582, 682, 30], [845, 892, 13]].map(([a, b, h]) => [zx(a), zx(b), h]), Z, 6, 6, '#b71c1c', '#ef8a8a', '#004d40', '#81c784');
  s += histogram([[45, 62, -3], [160, 282, -24], [390, 472, -22], [680, 845, -48], [893, 936, -14]].map(([a, b, h]) => [zx(a), zx(b), h]), Z, 6, 6, '#b71c1c', '#ef8a8a', '#004d40', '#81c784');
  s += line(L, Z, AX, Z, '#000', 4);
  s += curve(smooth(low4([[25, 1365], [60, 1365], [100, 1345], [130, 1310], [165, 1295], [200, 1310], [240, 1350], [270, 1385], [285, 1375], [310, 1340], [340, 1300], [395, 1270], [430, 1290], [450, 1330], [475, 1355], [500, 1330], [520, 1325], [547, 1325], [575, 1320], [600, 1280], [625, 1220], [650, 1165], [685, 1145], [720, 1170], [750, 1240], [775, 1320], [800, 1430], [830, 1480], [845, 1490], [870, 1490], [897, 1465], [930, 1478]])), '#4a90d9', 4);
  const red = '#d32f2f', grn = '#388e3c';
  [[red, [[25, 1350], [45, 1358], [71, 1355], [90, 1330], [110, 1305], [140, 1285], [164, 1293]]],
    [grn, [[164, 1293], [190, 1310], [215, 1325], [235, 1365], [255, 1390], [282, 1378]]],
    [red, [[282, 1378], [300, 1320], [320, 1295], [350, 1280], [375, 1262], [395, 1270]]],
    [grn, [[395, 1270], [410, 1300], [430, 1310], [450, 1370], [473, 1345]]],
    [red, [[473, 1345], [490, 1330], [520, 1325]]],
    [grn, [[520, 1325], [547, 1322]]],
    [red, [[547, 1322], [575, 1315], [605, 1225], [635, 1150], [686, 1145]]],
    [grn, [[686, 1145], [710, 1190], [735, 1250], [755, 1330], [780, 1440], [790, 1478], [815, 1485], [843, 1512]]],
    [red, [[843, 1490], [860, 1468], [880, 1450], [897, 1465]]],
    [grn, [[897, 1465], [915, 1480], [932, 1510]]]].forEach(([c, p]) => { s += curve(smooth(low4(p)), c, 4); });
  [[52, 1358, '#1b5e20'], [71, 1355, red], [164, 1293, '#1b5e20'], [282, 1378, red], [395, 1270, '#1b5e20'], [473, 1345, red], [520, 1325, '#1b5e20'], [547, 1322, red], [686, 1145, '#1b5e20'], [843, 1490, red], [897, 1465, '#1b5e20']].forEach(([a, b, c]) => {
    s += `<circle cx="${zx(a)}" cy="${y4(b)}" r="8" fill="${c}"/>`;
  });

  // scale and pane rules
  const INK = '#50535e';
  s += box(AX + 1.5, 525, 105, 1187, '#fff');
  [P1, P2, P3].forEach((y) => { s += line(L, y, 2856, y, INK, 3); });
  s += line(AX, 600, AX, 1712, INK, 3);
  [zx(222), zx(527), zx(758), zx(982), zx(1288)].forEach((x) => { s += line(x, P3, x, 1712, INK, 2); });
  [[730, '31400'], [937, '31000'], [1118, '30650'], [1242, '30437'], [1313, '30285'], [1380, '80'], [1445, '40'], [1508, '0'], [1616, '0']].forEach(([y, t]) => {
    s += line(AX, y, AX + 9, y, INK, 2.5);
    s += `<text class="axis" x="2773" y="${y + 9}">${t}</text>`;
  });
  [[595, '31628'], [632, '31585'], [707, '31439'], [792, '31274'], [832, '31195'], [921, '31023'], [977, '30915', 1], [1011, '30884'], [1046, '30801'], [1172, '30543'], [1257, '30383'], [1293, '30316']].forEach(([y, t, blue]) => {
    s += `<rect x="${AX}" y="${y - 17}" width="95" height="34" rx="4" fill="${blue ? '#0d47a1' : '#000'}"/>`;
    s += line(AX, y, AX + 9, y, '#fff', 2.5);
    s += `<text class="price" x="2773" y="${y + 9}">${t}</text>`;
  });
  return s;
}

class TvWidget extends HTMLElement {
  constructor() {
    super();
    this.attachShadow({ mode: 'open' });
    this.shadowRoot.innerHTML = `
      <style>
        :host {
          display: block;
          position: relative;
          width: 1242px;
          height: 1187px;
          box-sizing: border-box;
          border: 3px solid #b2b5be;
          border-radius: 6px 6px 0 0;
          overflow: hidden;
          font-family: "Open Sans", sans-serif;
          color: #50535e;
        }
        svg { display: block; margin: -3px 0 0 -3px; width: 1242px; height: 1187px; }
        text { font-family: "Open Sans", sans-serif; font-size: 24px; letter-spacing: -1.1px; }
        .price { fill: #fff; }
        .axis { fill: #50535e; }
        .title {
          position: absolute; left: 0; top: 9px; padding: 0 8px 0 19px; height: 54px;
          font-size: 32px; line-height: 48px; letter-spacing: -.65px; white-space: pre;
          background: rgba(255,255,255,.5);
        }
        .title i { font-style: normal; color: #c1c4cd; }
        .ohlc {
          position: absolute; left: 8px; top: 64px; padding: 0 10px 0 8px; height: 31px;
          font-size: 27px; line-height: 22px; letter-spacing: -1.35px; white-space: pre;
          background: rgba(255,255,255,.5);
        }
        .ohlc b { font-weight: 400; color: #b71c1c; }
        .tools {
          position: absolute; right: 0; top: 0; display: flex; height: 75px;
          background: #fff; border: solid #b2b5be; border-width: 0 0 3px 3px; border-radius: 0 0 0 6px;
        }
        .tools div { display: flex; align-items: center; justify-content: center; }
        .full { width: 75px; border-right: 3px solid #b2b5be; }
        .live { width: 241px; gap: 14px; font-size: 28px; letter-spacing: -.45px; }
        .play {
          position: absolute; left: 987px; top: 565px; width: 100px; height: 100px; border-radius: 50%;
          background: #fff; box-shadow: 0 0 30px rgba(0,0,0,.06);
          display: flex; align-items: center; justify-content: center;
        }
        .fold {
          position: absolute; left: 17px; width: 40px; height: 39px; box-sizing: border-box;
          background: #fff; border: 2px solid #e0e3eb; border-radius: 6px;
          display: flex; align-items: center; justify-content: center;
        }
      </style>
      <svg viewBox="1618 525 1242 1187" preserveAspectRatio="none">${bigChart()}</svg>
      <div class="title">E-mini Dow Jones ($5) Futures <i>·</i> 1h <i>·</i> CBOT_MINI</div>
      <div class="ohlc">O<b>30888</b>  H<b>30943</b>  L<b>30803</b>  C<b>30915</b>  <b>+27 (+0.09%)</b></div>
      <div class="tools">
        <div class="full">
          <svg style="margin:0;width:32px;height:32px" viewBox="0 0 32 32" fill="none" stroke="#50535e" stroke-width="2.4">
            <path d="M1 10V1H10M1 1L12 12M22 1H31V10M31 1L20 12M1 22V31H10M1 31L12 20M22 31H31V22M31 31L20 20"/>
          </svg>
        </div>
        <div class="live">
          <svg style="margin:0;width:40px;height:34px" viewBox="0 0 40 34" fill="none" stroke="#50535e" stroke-width="2.2">
            <path d="M3.500 9C4 4 8 1 13 1c3 0 5.500 1.500 7 4 1.500-2.500 4-4 7-4 6 0 10 4 10 10 0 4-2 7-5 10L20 32 8 24"/>
            <path d="M0 16H10L14 9 20 23 23 15H29"/>
          </svg>
          <span>Make It Live</span>
        </div>
      </div>
      <div class="play">
        <svg style="margin:0 0 0 4px;width:26px;height:34px" viewBox="0 0 26 34"><polygon points="0,0 26,17 0,34" fill="#36a3f7"/></svg>
      </div>
      <div class="fold" style="top:810px">
        <svg style="margin:0;width:10px;height:20px" viewBox="0 0 10 20" fill="none" stroke="#131722" stroke-width="2"><path d="M2 2L8 10 2 18"/></svg>
      </div>
      <div class="fold" style="top:1011px">
        <svg style="margin:0;width:10px;height:20px" viewBox="0 0 10 20" fill="none" stroke="#131722" stroke-width="2"><path d="M2 2L8 10 2 18"/></svg>
      </div>
    `;
  }
}

customElements.define('page-layout', PageLayout);
customElements.define('post-card', PostCard);
customElements.define('thumb-chart', ThumbChart);
customElements.define('post-view', PostView);
customElements.define('tv-widget', TvWidget);
</script>
</body>
</html>
